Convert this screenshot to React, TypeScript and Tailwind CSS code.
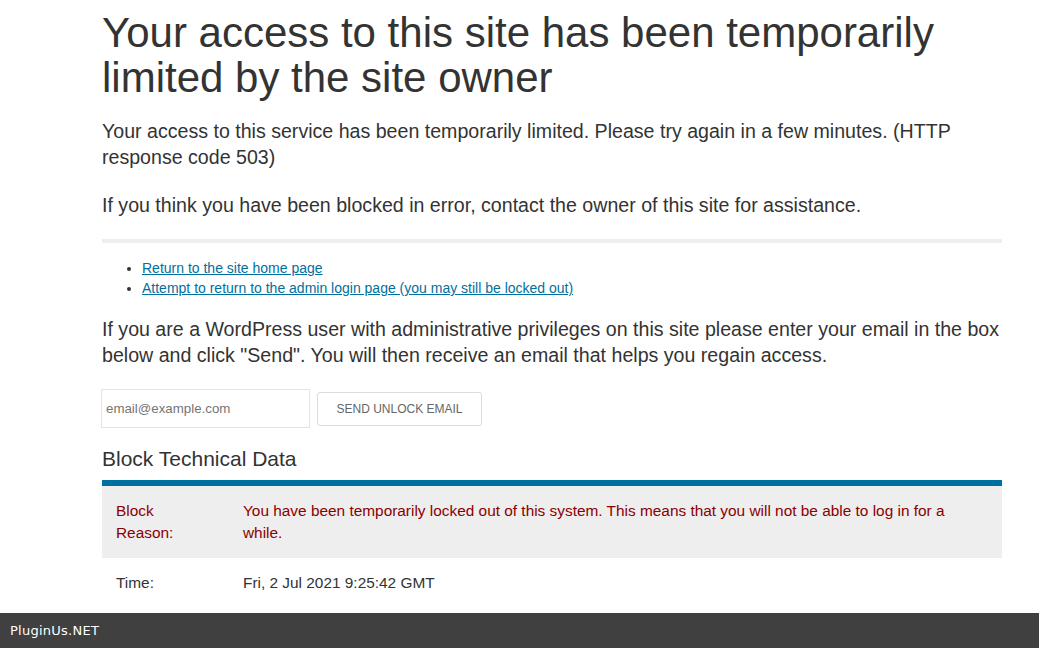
export default function App() {
  return (
    <div className="min-h-[648px] bg-white text-[#333] font-[family-name:'Liberation_Sans',Arial,sans-serif]">
      <main className="ml-[102px] w-[900px] pb-[60px]">
        {/* Header */}
        <h1 className="pt-[10px] text-[42px] leading-[45px] font-normal">
          Your access to this site has been temporarily limited by the site owner
        </h1>

        <p className="mt-[18px] text-[19.6px] leading-[26px]">
          Your access to this service has been temporarily limited. Please try again in a few minutes. (HTTP response code 503)
        </p>
        <p className="mt-[22px] text-[19.6px] leading-[26px]">
          If you think you have been blocked in error, contact the owner of this site for assistance.
        </p>

        <hr className="mt-[21px] border-0 h-[4px] bg-[#eeeeee]" />

        <ul className="mt-[15px] pl-[40px] list-disc text-[14px] leading-[20px] marker:text-[#333]">
          <li>
            <a href="#" className="text-[#00709e] underline">Return to the site home page</a>
          </li>
          <li>
            <a href="#" className="text-[#00709e] underline">Attempt to return to the admin login page (you may still be locked out)</a>
          </li>
        </ul>

        <p className="mt-[18px] text-[19.6px] leading-[26px]">
          If you are a WordPress user with administrative privileges on this site please enter your email in the box below and click "Send". You will then receive an email that helps you regain access.
        </p>

        {/* Unlock form */}
        <div className="mt-[21px] flex items-center gap-[7px] -ml-[1px]">
          <input
            type="text"
            placeholder="email@example.com"
            className="w-[209px] h-[39px] border border-[#e4e4e4] px-[4px] text-[13.3px] placeholder:text-[#757575] outline-none"
          />
          <button className="h-[34px] px-[18px] w-[165px] border border-[#dcdcdc] rounded-[3px] bg-white text-[12px] text-[#666] uppercase">
            Send Unlock Email
          </button>
        </div>

        {/* Technical data */}
        <h2 className="mt-[17px] text-[21px] leading-[28px] font-normal">Block Technical Data</h2>
        <div className="mt-[7px] border-t-[6px] border-[#00709e]">
          <div className="flex bg-[#eeeeee] px-[14px] pt-[14px] pb-[14px] text-[15.4px] leading-[22px] text-[#8b0000]">
            <div className="w-[127px] shrink-0 pr-[45px]">Block Reason:</div>
            <div className="pr-[40px]">
              You have been temporarily locked out of this system. This means that you will not be able to log in for a while.
            </div>
          </div>
          <div className="flex px-[14px] pt-[14px] pb-[14px] text-[15.4px] leading-[22px]">
            <div className="w-[127px] shrink-0">Time:</div>
            <div>Fri, 2 Jul 2021 9:25:42 GMT</div>
          </div>
        </div>
      </main>

      <div className="fixed bottom-0 left-0 right-0 h-[35px] bg-[#404040] flex items-center px-[10px] text-[13px] tracking-[0.25px] text-white font-[family-name:'DejaVu_Sans',sans-serif]">
        PluginUs.NET
      </div>
    </div>
  );
}
